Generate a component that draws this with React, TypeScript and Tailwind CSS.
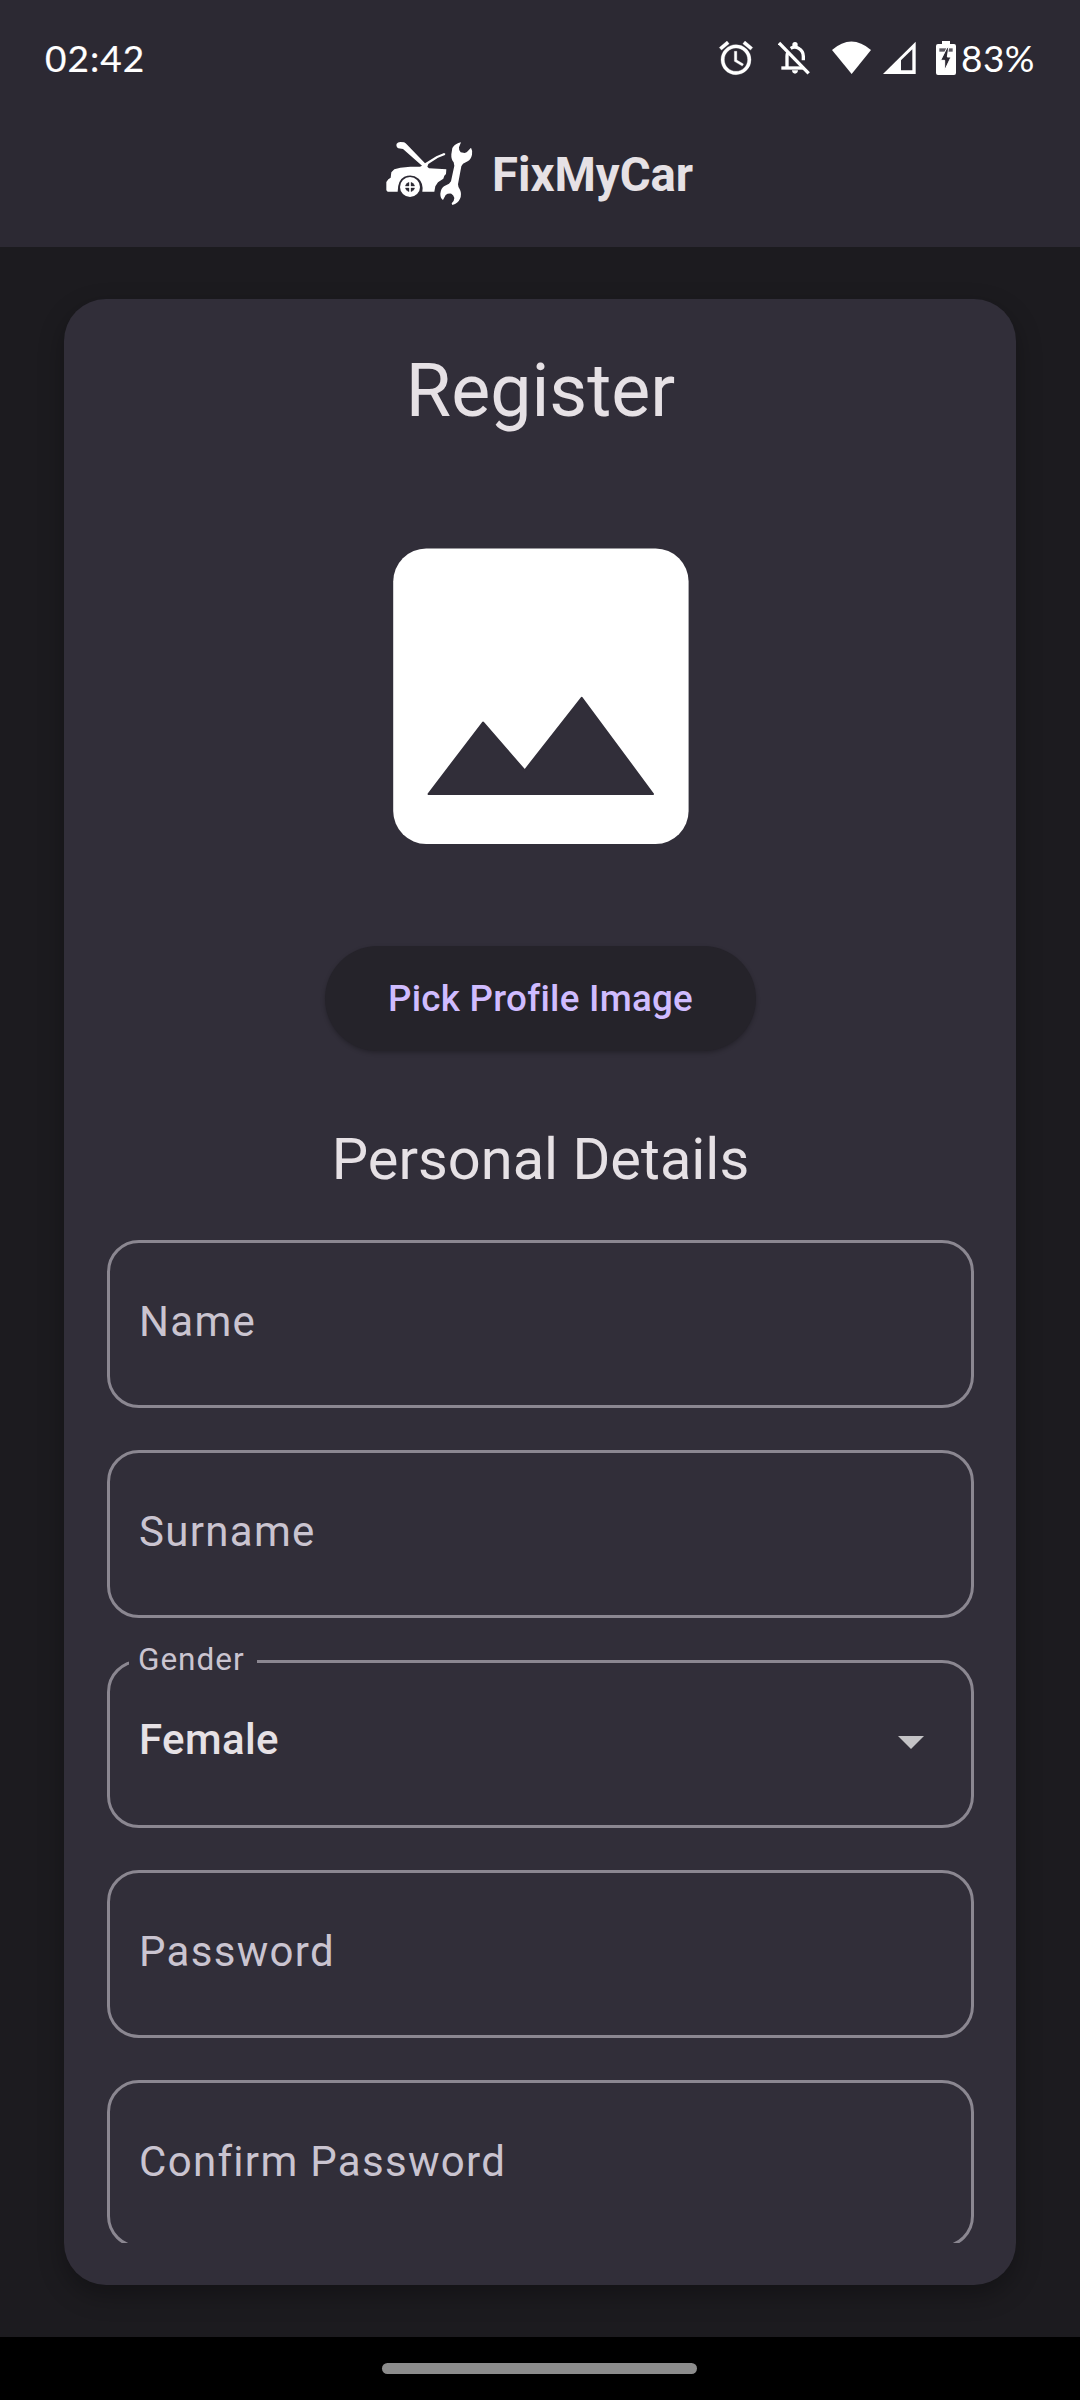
import React from "react";

function StatusBar() {
  return (
    <div className="flex h-[116px] items-center justify-between pl-[45px] pr-[45px] font-['Lato',sans-serif] text-[37px] leading-[44px] text-white">
      <span className="tracking-[1px] [-webkit-text-stroke:0.2px_#fff]">02:42</span>
      <div className="flex h-[44px] items-center">
        <svg className="mr-[22px] h-[40px] w-[40px]" viewBox="0 0 24 24" fill="#fff" stroke="#fff" strokeWidth="0.2">
          <path d="M22 5.72l-4.6-3.86-1.29 1.53 4.6 3.86L22 5.72zM7.88 3.39L6.6 1.86 2 5.71l1.29 1.53 4.59-3.85zM12.5 8H11v6l4.75 2.85.75-1.23-4-2.37V8zM12 4c-4.97 0-9 4.03-9 9s4.02 9 9 9a9 9 0 0 0 0-18zm0 16c-3.87 0-7-3.13-7-7s3.13-7 7-7 7 3.13 7 7-3.13 7-7 7z" />
        </svg>
        <svg className="mr-[22px] h-[34px] w-[32px]" viewBox="0 0 96 102">
          <g fill="none" stroke="#fff" strokeWidth="10">
            <path d="M10 81H77" />
            <path d="M27 78V46Q27 39 29 35" />
            <path d="M38 22Q50 15 62 22Q76 30 76 46V58" />
            <path d="M3 6L92 97" />
          </g>
          <circle cx="51" cy="11" r="8" fill="#fff" />
          <path d="M42 88H60Q59 98 51 98T42 88Z" fill="#fff" />
        </svg>
        <svg className="mr-[12px] h-[34px] w-[39px]" viewBox="0 0 117 102" fill="#fff">
          <path d="M0 27Q58 -24 117 27L59 99Z" />
        </svg>
        <svg className="mr-[20px] h-[34px] w-[33px]" viewBox="0 0 99 102">
          <path d="M0 99L98 2V99Z" fill="#fff" />
          <path d="M54 58L88 25V88H54Z" fill="#2c2933" />
        </svg>
        <svg className="mr-[5px] h-[34px] w-[20px]" viewBox="0 0 60 102">
          <path d="M18 0H42V9H54Q60 9 60 15V96Q60 102 54 102H6Q0 102 0 96V15Q0 9 6 9H18Z" fill="#fff" />
          <path d="M10 22H50V32H10Z" fill="#5c5962" />
          <path d="M33 20L14 58H26V88L45 48H34L38 20Z" fill="#2c2933" stroke="#fff" strokeWidth="3" />
        </svg>
        <span className="tracking-[0.5px]">83%</span>
      </div>
    </div>
  );
}

function Logo() {
  return (
    <svg className="h-[64px] w-[87px]" viewBox="47 63 261 192" fill="#fff">
      <path d="M79 71Q82 66 90 66L101 67Q105 68 109 73L164 130L198 109L221 99L225 101L224 105L203 113L174 132L171 140L176 145L228 148L227 162L222 167L219 176L203 187L195 199L192 215H156Q160 190 145 176Q126 160 102 170Q82 180 82 215H52L48 211V186L54 178L61 173L63 157L72 148L90 143L120 140H149L155 137L98 87L84 85Q76 79 79 71Z" />
      <circle cx="119" cy="201" r="30" />
      <path
        d="M116 187Q107 189 105 198H116ZM122 187Q131 189 133 198H122ZM116 215Q107 213 105 204H116ZM122 215Q131 213 133 204H122Z"
        fill="#2c2933"
        stroke="#2c2933"
      />
      <path d="M272 67L266 82Q265 92 271 97L283 99Q290 98 292 94L302 83Q307 91 305 104Q302 118 292 124L278 131L273 139L263 193Q263 202 269 209Q275 223 269 236Q264 249 246 255L244 250Q252 243 252 234Q250 225 243 221Q232 220 226 225L218 240Q210 235 210 221Q212 205 221 199L236 191L242 184L252 137L250 127Q242 118 243 103L246 84Q255 70 272 67Z" />
    </svg>
  );
}

function Field({ label }: { label: string }) {
  return (
    <div className="flex h-[168px] shrink-0 items-center rounded-[32px] border-[3px] border-[#8b8791] pl-[29px] text-[42px] leading-[63px] tracking-[1.31px] text-[#cac4d0]">
      <span className="-mt-[6px]">{label}</span>
    </div>
  );
}

function GenderField() {
  return (
    <div className="relative flex h-[168px] shrink-0 items-center justify-between rounded-[32px] border-[3px] border-[#8b8791] pl-[29px] pr-[47px]">
      <span className="absolute -top-[24px] left-[19px] bg-[#312e39] pl-[9px] pr-[12px] text-[31.5px] leading-[42px] tracking-[0.98px] text-[#cac4d0]">
        Gender
      </span>
      <span className="-mt-[10px] text-[42px] font-medium leading-[63px] tracking-[0.39px] text-[#e6e1e5]">Female</span>
      <svg className="-mt-[4px] h-[13px] w-[26px]" viewBox="0 0 26 13">
        <path d="M0 0H26L13 13Z" fill="#c4c3c6" />
      </svg>
    </div>
  );
}

export default function App() {
  return (
    <div className="flex h-[2400px] w-[1080px] flex-col overflow-hidden bg-[#1c1b1f] font-['Roboto',sans-serif] text-[#e6e1e5]">
      <header className="h-[247px] shrink-0 bg-[#2c2933]">
        <StatusBar />
        <div className="flex items-start pl-[386px] pt-[25px]">
          <Logo />
          <h1 className="ml-[19px] pt-[2px] text-[47.25px] font-bold leading-[64px]">FixMyCar</h1>
        </div>
      </header>

      <main className="flex min-h-0 flex-1 flex-col px-16 pb-[52px] pt-[52px]">
        <section className="min-h-0 flex-1 rounded-[42px] bg-[#312e39] py-[42px] pl-[43px] pr-[42px] shadow-[0_10px_26px_rgba(0,0,0,0.3)]">
          <div className="flex h-full flex-col overflow-hidden">
            <h2 className="mt-[3px] shrink-0 text-center text-[73.5px] leading-[94px]">Register</h2>
            <svg className="mx-auto mt-[110px] h-[296px] w-[296px] shrink-0" viewBox="0 0 296 296">
              <rect x="0.2" y="0.6" width="295.4" height="295.3" rx="33" fill="#fff" />
              <path
                d="M35.5 246L90 174.5L131.7 222.5L188.7 149.8L260 246Z"
                fill="#312e39"
                stroke="#312e39"
                strokeWidth="2"
                strokeLinejoin="round"
              />
            </svg>
            <button className="mx-auto mt-[102px] h-[105px] w-[431px] shrink-0 rounded-full bg-[#25232a] text-[36.75px] font-medium tracking-[0.26px] text-[#d0bcff] shadow-[0_2px_4px_rgba(0,0,0,0.25)]">
              Pick Profile Image
            </button>
            <h3 className="mt-[71px] shrink-0 text-center text-[57.75px] leading-[74px]">Personal Details</h3>
            <div className="mt-[44px] flex shrink-0 flex-col gap-[42px]">
              <Field label="Name" />
              <Field label="Surname" />
              <GenderField />
              <Field label="Password" />
              <Field label="Confirm Password" />
            </div>
          </div>
        </section>
      </main>

      <footer className="flex h-[63px] shrink-0 justify-center bg-black pr-[2px] pt-[26px]">
        <div className="h-[11px] w-[315px] rounded-full bg-[#8c8c8c]" />
      </footer>
    </div>
  );
}
